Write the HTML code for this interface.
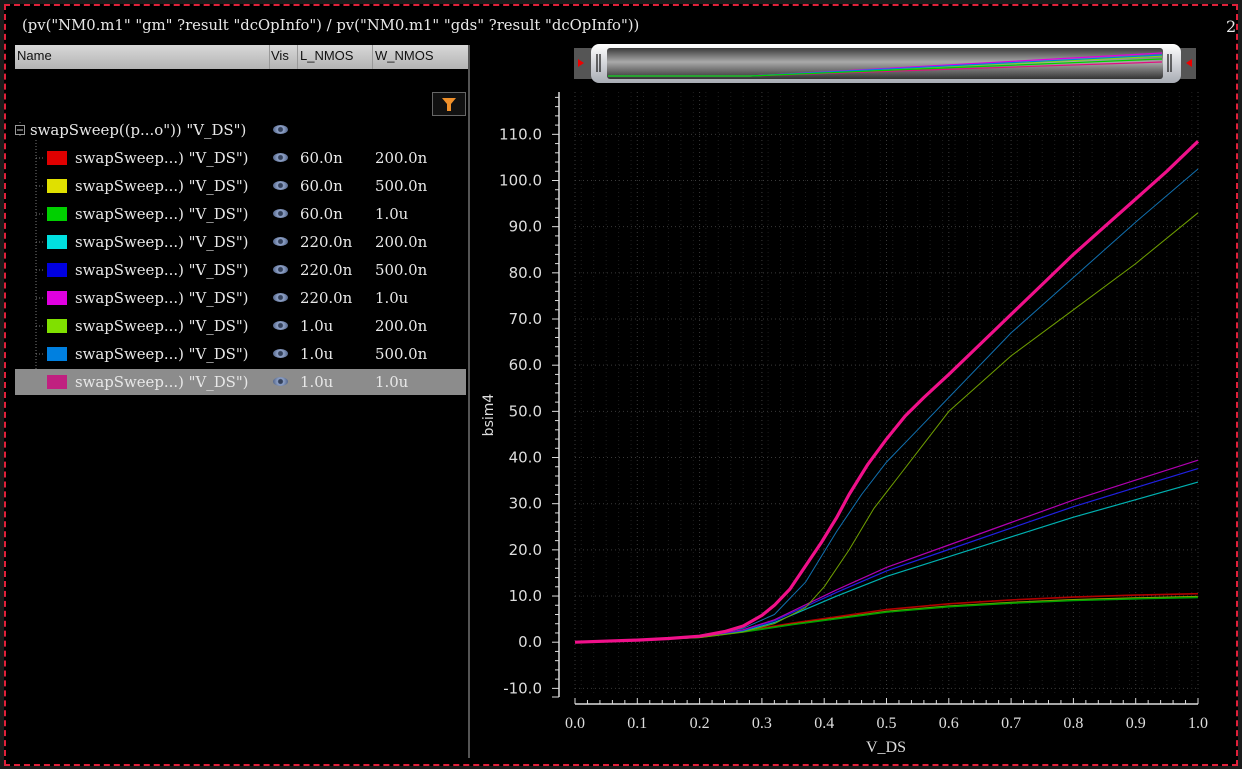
<!DOCTYPE html>
<html><head><meta charset="utf-8"><style>
html,body{margin:0;padding:0;background:#1a1a1a;}
body{width:1242px;height:769px;position:relative;overflow:hidden;font-family:"DejaVu Serif",serif;color:#e8e8e8;}
#frame{position:absolute;left:4px;top:4px;width:1230px;height:758px;border:2px dashed #e0203a;background:#000;}
.t{position:absolute;white-space:nowrap;}
#hdr{position:absolute;left:15px;top:45px;width:453px;height:24px;background:linear-gradient(#d8d8d8,#b4b4b4);font-family:"Liberation Sans",sans-serif;font-size:13px;color:#111;}
#hdr div{position:absolute;top:0;height:24px;line-height:22px;border-right:1px solid #999;padding-left:2px;}
.row{position:absolute;left:15px;width:451px;height:26px;font-size:14.9px;}
.row .sw{position:absolute;left:32px;top:6px;width:20px;height:14px;}
.row .nm{position:absolute;left:60px;top:4px;}
.row .eye{position:absolute;left:258px;top:8px;width:15px;height:9px;border-radius:50%;background:radial-gradient(circle,#33405a 0 2px,#8fa2c8 3px,#5a6c90 7px);}
.row .l{position:absolute;left:285px;top:4px;}
.row .w{position:absolute;left:360px;top:4px;}
</style></head><body>
<div id="frame"></div>
<div class="t" style="left:22px;top:17px;font-size:14.8px;">(pv("NM0.m1" "gm" ?result "dcOpInfo") / pv("NM0.m1" "gds" ?result "dcOpInfo"))</div>
<div class="t" style="left:1226px;top:17px;font-size:16px;">2</div>
<div id="hdr"><div style="left:0;width:252px">Name</div><div style="left:254px;width:26px">Vis</div><div style="left:283px;width:72px">L_NMOS</div><div style="left:358px;width:94px;border:none">W_NMOS</div></div>
<div style="position:absolute;left:468px;top:45px;width:2px;height:713px;background:#555;"></div>
<div style="position:absolute;left:432px;top:92px;width:32px;height:22px;border:1px solid #666;background:#111;"><svg width="32" height="22"><path d="M9 5 H23 L18 11 V18 H14 V11 Z" fill="#f0902a"/></svg></div>
<svg style="position:absolute;left:0;top:0" width="470" height="769">
<path d="M20 122 V125 M20 135 V138 M36 140 V380 H44" stroke="#777" stroke-dasharray="1 2" fill="none"/>
<rect x="15.5" y="125.5" width="9" height="9" fill="none" stroke="#999"/><path d="M17 130 H23" stroke="#ccc"/>
<g id="dots"></g>
</svg>
<div class="row" style="top:117px;"><div class="nm" style="left:15px">swapSweep((p...o")) "V_DS")</div><div class="eye"></div></div>
<div id="rows"></div>
<svg id="plot" style="position:absolute;left:0;top:0" width="1242" height="769"></svg>
<script>
var rows=[["#e00000","60.0n","200.0n"],["#e0e000","60.0n","500.0n"],["#00d000","60.0n","1.0u"],["#00e0e0","220.0n","200.0n"],["#0000e0","220.0n","500.0n"],["#e000e0","220.0n","1.0u"],["#80e000","1.0u","200.0n"],["#0080e0","1.0u","500.0n"],["#c02080","1.0u","1.0u"]];
var h="",d="";
rows.forEach(function(r,i){var top=145+i*28;var sel=i==8;
h+='<div class="row" style="top:'+top+'px;'+(sel?'background:#8c8c8c;':'')+'"><div class="sw" style="background:'+r[0]+'"></div><div class="nm">swapSweep...) "V_DS")</div><div class="eye"></div><div class="l">'+r[1]+'</div><div class="w">'+r[2]+'</div></div>';
d+='<path d="M36 '+(top+13)+' H44" stroke="#777" stroke-dasharray="1 2"/>';});
document.getElementById("rows").innerHTML=h;document.getElementById("dots").innerHTML=d;
function X(v){return 575+623*v}function Y(v){return 642.2-4.617*v}
var s="";
s+='<defs><linearGradient id="g1" x1="0" y1="0" x2="0" y2="1"><stop offset="0" stop-color="#3a3a3a"/><stop offset=".45" stop-color="#aaa"/><stop offset="1" stop-color="#333"/></linearGradient><linearGradient id="g2" x1="0" y1="0" x2="0" y2="1"><stop offset="0" stop-color="#fff"/><stop offset="1" stop-color="#a8acb4"/></linearGradient></defs>';
s+='<rect x="574" y="48" width="622" height="31" fill="#555"/><path d="M584 63 L578 59 V67 Z M1186 63 L1192 59 V67 Z" fill="#e00"/>';
s+='<rect x="591" y="44" width="590" height="39" rx="8" fill="url(#g2)"/><rect x="607" y="48" width="556" height="31" rx="3" fill="url(#g1)"/>';
s+='<path d="M597 54 V72 M600 54 V72 M1168 54 V72 M1171 54 V72" stroke="#111" stroke-width="1.2"/>';
var mini=[["#e01080",76],["#80e000",70],["#e000e0",67],["#0080e0",69],["#00d000",73]];
mini.forEach(function(m){s+='<path d="M608 76 L750 76 L1162 '+(m[1]-14)+'" stroke="'+m[0]+'" fill="none" stroke-width="1.2"/>';});
for(var i=0;i<=10;i++){s+='<line x1="'+X(i/10)+'" y1="92" x2="'+X(i/10)+'" y2="695" stroke="#3a3a3a" stroke-dasharray="1 3"/>';}
for(var v=-10;v<=110;v+=10){s+='<line x1="575" y1="'+Y(v)+'" x2="1198" y2="'+Y(v)+'" stroke="#3a3a3a" stroke-dasharray="1 3"/>';}
for(var i=0;i<50;i++){var xx=X(i/50+0.01);s+='<line x1="'+xx+'" y1="92" x2="'+xx+'" y2="695" stroke="#1e1e1e" stroke-dasharray="1 3"/>';}
s+='<line x1="559" y1="92" x2="559" y2="697" stroke="#ddd" stroke-width="1.5"/>';
for(var v=-10;v<=118;v+=2){var mj=v%10==0;s+='<line x1="'+(mj?552:555)+'" y1="'+Y(v)+'" x2="559" y2="'+Y(v)+'" stroke="#ddd"/>';if(mj)s+='<text x="542" y="'+(Y(v)+5)+'" text-anchor="end" font-family="DejaVu Sans,sans-serif" font-size="15" fill="#ddd">'+v.toFixed(1)+'</text>';}
s+='<line x1="552" y1="697" x2="559" y2="697" stroke="#ddd"/>';
s+='<text transform="translate(493,415) rotate(-90)" text-anchor="middle" font-family="DejaVu Sans,sans-serif" font-size="14" fill="#ddd">bsim4</text>';
s+='<line x1="575" y1="704" x2="1198" y2="704" stroke="#ddd" stroke-width="1.5"/>';
for(var i=0;i<=50;i++){var mj=i%5==0,xx=X(i/50);s+='<line x1="'+xx+'" y1="'+(mj?698:700)+'" x2="'+xx+'" y2="704" stroke="#ddd"/>';if(mj)s+='<text x="'+xx+'" y="728" text-anchor="middle" font-family="Liberation Serif,serif" font-size="16" fill="#ddd">'+(i/50).toFixed(1)+'</text>';}
s+='<text x="886" y="752" text-anchor="middle" font-family="Liberation Serif,serif" font-size="16" fill="#ddd">V_DS</text>';
var low=[[0,0],[.1,.4],[.2,1.1],[.27,2.3],[.35,4],[.42,5.3],[.5,6.8],[.6,8],[.7,8.8],[.8,9.4],[.9,9.8],[1,10.1]];
function sc(arr,k){return arr.map(function(p){return [p[0],p[1]*k]})}
var mid=[[0,0],[.1,.4],[.2,1.1],[.27,2.5],[.32,4.5],[.37,7.5],[.42,10.5],[.5,15],[.6,19.5],[.7,24],[.8,28.5],[.9,32.5],[1,36.5]];
var hi=[[0,0],[.1,.45],[.15,.8],[.2,1.3],[.24,2.3],[.27,3.5],[.3,5.8],[.32,8],[.345,11.5],[.37,16.5],[.395,21.5],[.42,27],[.44,32],[.47,38.5],[.5,44],[.53,49],[.56,53],[.6,58],[.65,64.5],[.7,71],[.75,77.5],[.8,84],[.85,90],[.9,96],[.95,102],[1,108.5]];
var blu=[[0,0],[.2,1.1],[.27,3],[.32,6],[.37,13],[.42,24],[.46,32],[.5,39],[.55,46],[.6,53],[.7,67],[.8,79],[.9,91],[1,102.5]];
var yg=[[0,0],[.2,1],[.27,2.2],[.32,4],[.37,7.5],[.4,12],[.44,20],[.48,29],[.52,36],[.56,43],[.6,50],[.7,62],[.8,72],[.9,82],[1,93]];
function pl(a,c,w){return '<polyline points="'+a.map(function(p){return X(p[0]).toFixed(1)+','+Y(p[1]).toFixed(1)}).join(' ')+'" fill="none" stroke="'+c+'" stroke-width="'+w+'" stroke-linejoin="round"/>'}
s+=pl(sc(low,1.04),"#b00000",1.6)+pl(sc(low,0.98),"#a0a000",1.3)+pl(sc(low,0.96),"#00a000",1.6);
s+=pl(sc(mid,0.95),"#00b0b0",1.2)+pl(sc(mid,1.03),"#2020e0",1.2)+pl(sc(mid,1.08),"#b000b0",1.2);
s+=pl(yg,"#70a000",1)+pl(blu,"#1070b0",1)+pl(hi,"#f0108a",3.2);
document.getElementById("plot").innerHTML=s;
</script>
</body></html>
